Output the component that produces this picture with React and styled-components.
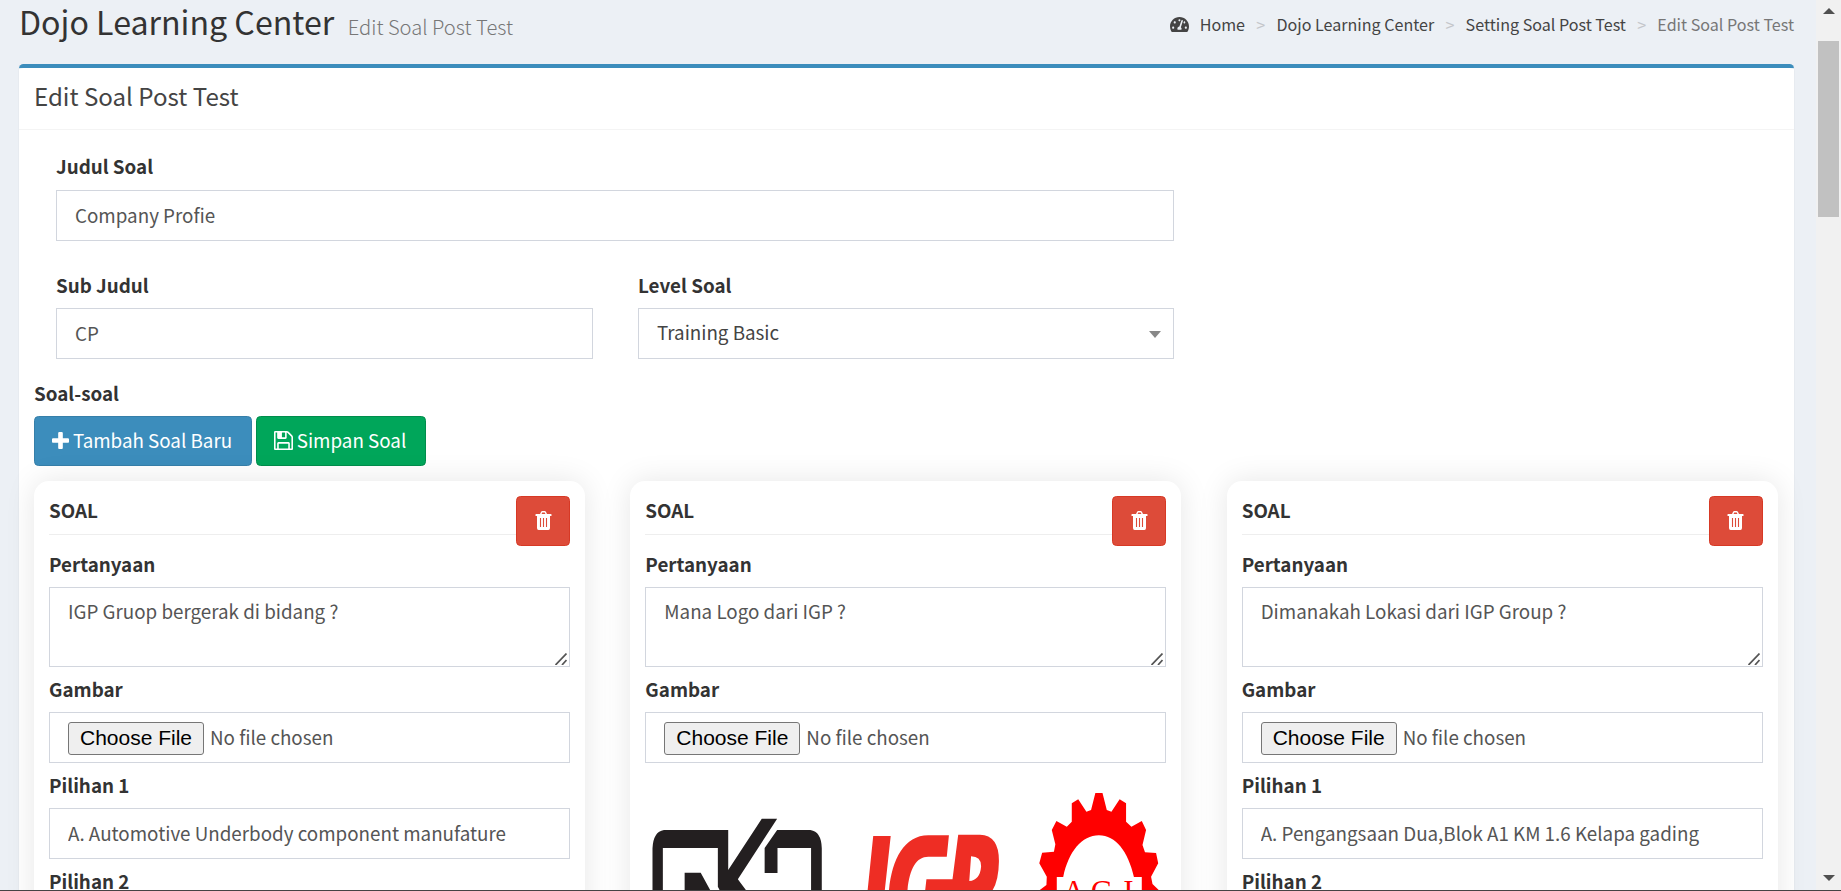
import React from "react";
import styled, { createGlobalStyle } from "styled-components";
import { FaTachometerAlt } from "react-icons/fa";

const Global = createGlobalStyle`
  *, *::before, *::after { box-sizing: border-box; }
  html, body { margin: 0; padding: 0; height: 891px; overflow: hidden; }
  body { background: #ecf0f5; color: #333; font-family: "Noto Sans CJK SC", "Open Sans", sans-serif; font-size: 18.8px; line-height: 30px; }
  input, textarea, button { font: inherit; }
`;

const Window = styled.div`
  display: flex;
  height: 891px;
  overflow: hidden;
  border-bottom: 1px solid #444;
`;

const Page = styled.main`
  flex: 1;
  min-width: 0;
  height: 890px;
  overflow: hidden;
  padding: 0 22px 0 19px;
`;

const PageHeader = styled.header`
  display: flex;
  justify-content: space-between;
  height: 64px;
`;

const PageTitle = styled.h1`
  margin: 0;
  font-size: 32.15px;
  font-weight: 400;
  line-height: 42px;
  white-space: nowrap;
`;

const PageSubtitle = styled.small`
  margin-left: 13.5px;
  font-size: 20.15px;
  font-weight: 300;
  color: #777;
`;

const Breadcrumb = styled.ol`
  display: flex;
  margin: 0;
  padding: 0;
  height: 48px;
  list-style: none;
  font-size: 16.1px;
  line-height: 26px;
  white-space: nowrap;
`;

const Crumb = styled.li`
  display: flex;
  align-items: center;
  color: ${(p) => (p.$active ? "#777" : "#444")};
  &:not(:first-child)::before {
    content: ">";
    width: 31.4px;
    text-align: center;
    color: #c4c6ca;
  }
  svg { margin-right: 11px; }
`;

const Box = styled.section`
  height: 900px;
  background: #fff;
  border-top: 4px solid #3c8dbc;
  border-radius: 4.5px;
  box-shadow: 0 1.5px 1.5px rgba(0, 0, 0, 0.1);
`;

const BoxHeader = styled.div`
  height: 62px;
  padding: 15px;
  border-bottom: 1px solid #f4f4f4;
`;

const BoxTitle = styled.h3`
  margin: 0;
  font-size: 24.1px;
  font-weight: 400;
  line-height: 26px;
  color: #444;
`;

const BoxBody = styled.div`
  padding: 0 15px;
`;

const Fields = styled.div`
  width: 1118px;
  margin-left: 22px;
  padding-top: 22px;
`;

const FieldRow = styled.div`
  display: grid;
  grid-template-columns: ${(p) => (p.$split ? "537px 536px" : "1fr")};
  column-gap: 45px;
  margin-bottom: ${(p) => (p.$split ? "20px" : "30px")};
`;

const Label = styled.label`
  display: block;
  height: 30px;
  margin-bottom: ${(p) => p.$gap ?? 7}px;
  font-weight: 700;
  line-height: 28px;
`;

const Control = styled.input`
  display: block;
  width: 100%;
  height: 51px;
  padding: 0 18px 2px;
  border: 1px solid #d2d6de;
  border-radius: 0;
  outline: none;
  background: #fff;
  color: #555;
  line-height: 30px;
`;

const Select = styled.div`
  display: flex;
  align-items: center;
  justify-content: space-between;
  height: 51px;
  padding: 0 12px 3px 18px;
  border: 1px solid #d2d6de;
  color: #444;
`;

const Caret = styled.span`
  margin-top: 4px;
  border: 6px solid transparent;
  border-top: 7px solid #888;
  border-bottom: 0;
`;

const Actions = styled.div`
  display: flex;
  gap: 4px;
  margin-bottom: 15px;
`;

const Button = styled.button`
  display: flex;
  align-items: center;
  justify-content: center;
  gap: 4px;
  width: ${(p) => p.$w}px;
  height: 50px;
  padding: 0 ${(p) => (p.$w > 100 ? 2 : 0)}px 2px 0;
  border: 1px solid ${(p) => p.$edge};
  border-radius: 4.5px;
  background: ${(p) => p.$fill};
  color: #fff;
  white-space: nowrap;
`;

const Cards = styled.div`
  display: grid;
  grid-template-columns: repeat(3, 1fr);
  column-gap: 45.2px;
  width: 1743.8px;
`;

const Card = styled.article`
  height: 520px;
  padding: 15px;
  border-radius: 15px;
  background: #fff;
  box-shadow: 0 0 30px rgba(0, 0, 0, 0.1);
`;

const CardHeader = styled.div`
  display: flex;
  align-items: flex-start;
  justify-content: space-between;
  height: 39px;
  margin-bottom: 15px;
  border-bottom: 1px solid #eee;
`;

const CardTitle = styled.strong`
  line-height: 28px;
`;

const AreaWrap = styled.div`
  position: relative;
  height: 80px;
  margin-bottom: 8px;
`;

const TextArea = styled.textarea`
  display: block;
  width: 100%;
  height: 80px;
  padding: 8px 18px;
  border: 1px solid #d2d6de;
  border-radius: 0;
  outline: none;
  resize: none;
  overflow: hidden;
  color: #555;
  line-height: 30px;
`;

const Grip = styled.svg`
  position: absolute;
  right: 3px;
  bottom: 2px;
`;

const FileInput = styled(Control)`
  padding: 8px 18px;
  line-height: 32px;
  &::file-selector-button {
    width: 136px;
    height: 33px;
    margin: 0 6px 0 0;
    padding: 0;
    border: 1px solid #767676;
    border-radius: 3px;
    background: #efefef;
    color: #000;
    font: 21px "Liberation Sans", Arial, sans-serif;
  }
`;

const Option = styled.div`
  padding-top: 8px;
`;

const Logos = styled.svg`
  display: block;
  margin-top: 22px;
`;

const Scrollbar = styled.aside`
  display: flex;
  flex-direction: column;
  align-items: center;
  width: 25px;
  height: 890px;
  background: #f1f1f1;
`;

const Thumb = styled.div`
  width: 21px;
  height: 176px;
  margin-top: 27px;
  margin-bottom: auto;
  background: #c1c1c1;
`;

const Arrow = styled.span`
  flex: none;
  margin: ${(p) => (p.$up ? "8px 0 0" : "0 0 9px")};
  border: 6px solid transparent;
  border-${(p) => (p.$up ? "bottom" : "top")}: 6px solid #505050;
  border-${(p) => (p.$up ? "top" : "bottom")}: 0;
`;

const PlusIcon = () => (
  <svg width="17" height="17" viewBox="0 192 1408 1408" fill="#fff">
    <path d="M1408 800v192q0 40-28 68t-68 28H896v416q0 40-28 68t-68 28H608q-40 0-68-28t-28-68v-416H96q-40 0-68-28t-28-68V800q0-40 28-68t68-28h416V288q0-40 28-68t68-28h192q40 0 68 28t28 68v416h416q40 0 68 28t28 68z" />
  </svg>
);

const SaveIcon = () => (
  <svg width="19" height="19" viewBox="0 0 1536 1536" fill="#fff">
    <path d="M384 1408h768v-384H384v384zm896 0h128V512q0-14-10-38.500t-20-34.500l-281-281q-10-10-34-20t-39-10v416q0 40-28 68t-68 28H352q-40 0-68-28t-28-68V128H128v1280h128V992q0-40 28-68t68-28h832q40 0 68 28t28 68v416zM896 480V160q0-13-9.500-22.500T864 128H672q-13 0-22.500 9.500T640 160v320q0 13 9.500 22.500T672 512h192q13 0 22.500-9.500T896 480zm640 32v928q0 40-28 68t-68 28H96q-40 0-68-28t-28-68V96q0-40 28-68T96 0h928q40 0 88 20t76 48l280 280q28 28 48 76t20 88z" />
  </svg>
);

const TrashIcon = () => (
  <svg width="17" height="19" viewBox="0 0 17 19">
    <path fill="#fff" d="M1 3h4l1-2q.4-1 1.400-1h2.200q1 0 1.400 1l1 2h4q.5 0 .5.600V5H15v12q0 2-1.600 2H3.600Q2 19 2 17V5H.5V3.600Q.5 3 1 3zM6.600 3h3.800l-.6-1.400H7.200z" />
    <path stroke="#dd4b39" strokeWidth="1.100" d="M5.500 7v9M8.500 7v9M11.500 7v9" />
  </svg>
);

const CompanyLogos = () => (
  <Logos width="521" height="106" viewBox="645 785 521 106">
    <g transform="translate(630 780) scale(.35714 .33333)">
      <path fill="#231f20" d="M63 345V205Q65 155 95 150H275V270L369 116H412L302 298L335 345H258L246 320V204H92V345zM153 345V278H198L232 345zM377 279V204L412 150H505Q536 155 537 205V345H507V204H413V279z" />
      <path fill="#ee2d24" fillRule="evenodd" d="M681 168H730L712 345H664zM724 345C730 245 765 166 835 166H893L887 230H835C800 230 780 270 776 345zM919 164H980Q1034 166 1033 245Q1032 315 1005 345H825L830 298H903zM955 229L950 303Q980 300 983 260Q984 230 955 229z" />
      <path fill="#f00" d="M1303 39H1323L1335 90L1348 95L1371 58L1389 70V125L1404 140L1433 123L1445 150L1435 195L1442 217L1473 219L1479 250L1459 290L1463 312L1490 340H1433V291H1411C1395 215 1360 166 1313 166C1265 166 1228 215 1213 291H1195V340H1135L1166 315L1167 290L1146 250L1154 218L1187 215L1191 193L1181 150L1194 123L1223 140L1237 125V70L1255 58L1278 95L1291 90z" />
    </g>
    <text y="902" fill="#f00" fontFamily="Liberation Serif, serif" fontSize="31" textAnchor="middle">
      <tspan x="1074">A</tspan><tspan x="1102">G</tspan><tspan x="1128.500">I</tspan>
    </text>
  </Logos>
);

const questions = [
  { text: "IGP Gruop bergerak di bidang ?", option: "A. Automotive Underbody component manufature" },
  { text: "Mana Logo dari IGP ?", logos: true },
  { text: "Dimanakah Lokasi dari IGP Group ?", option: "A. Pengangsaan Dua,Blok A1 KM 1.6 Kelapa gading" },
];

const QuestionCard = ({ q }) => (
  <Card>
    <CardHeader>
      <CardTitle>SOAL</CardTitle>
      <Button $w={54} $fill="#dd4b39" $edge="#d73925" aria-label="Hapus"><TrashIcon /></Button>
    </CardHeader>
    <Label>Pertanyaan</Label>
    <AreaWrap>
      <TextArea defaultValue={q.text} />
      <Grip width="12" height="12" viewBox="0 0 12 12">
        <path d="M.5 12L11.500.5M7 12L11.500 7" stroke="#555" strokeWidth="1.700" />
      </Grip>
    </AreaWrap>
    <Label>Gambar</Label>
    <FileInput type="file" />
    {q.logos ? <CompanyLogos /> : (
      <>
        <Option>
          <Label>Pilihan 1</Label>
          <Control defaultValue={q.option} />
        </Option>
        <Option>
          <Label>Pilihan 2</Label>
          <Control />
        </Option>
      </>
    )}
  </Card>
);

export default function App() {
  return (
    <Window>
      <Global />
      <Page>
        <PageHeader>
          <PageTitle>Dojo Learning Center<PageSubtitle>Edit Soal Post Test</PageSubtitle></PageTitle>
          <Breadcrumb>
            <Crumb><FaTachometerAlt size={19} />Home</Crumb>
            <Crumb>Dojo Learning Center</Crumb>
            <Crumb>Setting Soal Post Test</Crumb>
            <Crumb $active>Edit Soal Post Test</Crumb>
          </Breadcrumb>
        </PageHeader>
        <Box>
          <BoxHeader><BoxTitle>Edit Soal Post Test</BoxTitle></BoxHeader>
          <BoxBody>
            <Fields>
              <FieldRow>
                <div><Label $gap={8}>Judul Soal</Label><Control defaultValue="Company Profie" /></div>
              </FieldRow>
              <FieldRow $split>
                <div><Label>Sub Judul</Label><Control defaultValue="CP" /></div>
                <div><Label>Level Soal</Label><Select>Training Basic<Caret /></Select></div>
              </FieldRow>
            </Fields>
            <Label>Soal-soal</Label>
            <Actions>
              <Button $w={218} $fill="#3c8dbc" $edge="#367fa9"><PlusIcon />Tambah Soal Baru</Button>
              <Button $w={170} $fill="#00a65a" $edge="#008d4c"><SaveIcon />Simpan Soal</Button>
            </Actions>
            <Cards>{questions.map((q) => <QuestionCard key={q.text} q={q} />)}</Cards>
          </BoxBody>
        </Box>
      </Page>
      <Scrollbar><Arrow $up /><Thumb /><Arrow /></Scrollbar>
    </Window>
  );
}
